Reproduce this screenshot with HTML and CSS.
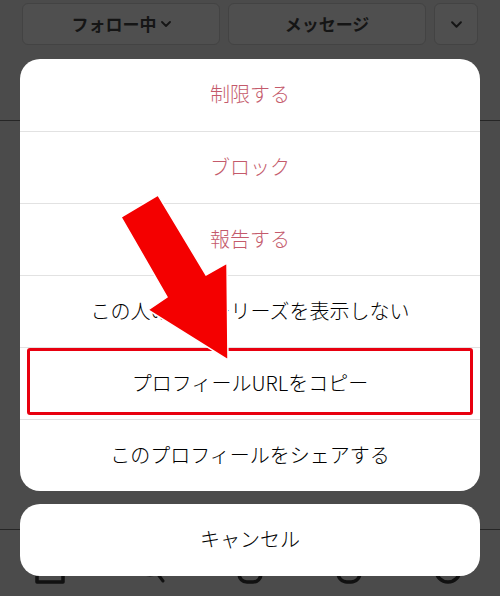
FILE: index.html
```html
<!DOCTYPE html>
<html lang="ja">
<head>
<meta charset="utf-8">
<link rel="stylesheet" href="styles.css">
</head>
<body>
<div class="page">
  <div class="topbar">
    <div class="btn btn-wide">フォロー中<svg class="chev" viewBox="0 0 10 6" width="10" height="6"><path d="M1 1l4 4 4-4" fill="none" stroke="#151515" stroke-width="1.8" stroke-linecap="round" stroke-linejoin="round"/></svg></div>
    <div class="btn btn-wide">メッセージ</div>
    <div class="btn btn-small"><svg class="chev" viewBox="0 0 10 6" width="11" height="7"><path d="M1 1l4 4 4-4" fill="none" stroke="#151515" stroke-width="1.8" stroke-linecap="round" stroke-linejoin="round"/></svg></div>
  </div>
  <div class="rule rule-tabs"></div>
  <div class="spacer"></div>
  <div class="rule rule-nav"></div>
  <div class="nav">
    <svg class="nav-icon" width="32" height="30" viewBox="0 0 32 30"><path d="M3 12L16 2l13 10v16H3z" fill="none" stroke="#111" stroke-width="3.5" stroke-linejoin="round"/></svg>
    <svg class="nav-icon" width="26" height="30" viewBox="0 0 26 30"><circle cx="11" cy="12" r="9" fill="none" stroke="#111" stroke-width="3"/><path d="M18 19l6 8" stroke="#111" stroke-width="3" stroke-linecap="round"/></svg>
    <svg class="nav-icon" width="26" height="30" viewBox="0 0 26 30"><rect x="2" y="4" width="22" height="24" rx="8" fill="none" stroke="#111" stroke-width="3.5"/></svg>
    <svg class="nav-icon" width="26" height="30" viewBox="0 0 26 30"><rect x="2" y="4" width="22" height="24" rx="9" fill="none" stroke="#111" stroke-width="3.5"/></svg>
    <svg class="nav-icon" width="28" height="30" viewBox="0 0 28 30"><circle cx="14" cy="16" r="12" fill="none" stroke="#111" stroke-width="3.5"/></svg>
  </div>

  <div class="overlay">
    <div class="sheet">
      <div class="item danger">制限する</div>
      <div class="item danger">ブロック</div>
      <div class="item danger">報告する</div>
      <div class="item">この人のストーリーズを表示しない</div>
      <div class="item">プロフィールURLをコピー</div>
      <div class="item">このプロフィールをシェアする</div>
    </div>
    <div class="sheet cancel">
      <div class="item">キャンセル</div>
    </div>
  </div>

  <div class="highlight"></div>
  <svg class="arrow" width="500" height="596" viewBox="0 0 500 596">
    <polygon points="158,195 121,217 167,297 148,310 228,360 227,263 206,275" fill="#f40000" stroke="#ffffff" stroke-width="1.5" stroke-linejoin="miter"/>
  </svg>
</div>
</body>
</html>
```

FILE: styles.css
```css
html, body {
  margin: 0;
  padding: 0;
  background: #4b4b4b;
}

.page {
  position: relative;
  width: 500px;
  height: 596px;
  overflow: hidden;
  background: #4b4b4b;
  font-family: "Noto Sans CJK JP", "Noto Sans", sans-serif;
}

.topbar {
  display: flex;
  gap: 8px;
  padding: 3px 22px 0 22px;
  height: 42px;
}

.btn {
  box-sizing: border-box;
  height: 42px;
  border: 1px solid #434343;
  background: #4f4f4f;
  border-radius: 6px;
  display: flex;
  align-items: center;
  justify-content: center;
  gap: 4px;
  font-size: 17px;
  font-weight: 700;
  color: #151515;
  padding-bottom: 2px;
}

.btn-wide { width: 198px; }
.btn-small { width: 44px; }

.chev { display: block; margin-top: 2px; }

.rule {
  height: 1px;
  background: #262626;
}

.rule-tabs { margin-top: 75px; }

.spacer { height: 408px; }

.nav {
  display: flex;
  justify-content: space-between;
  align-items: flex-start;
  padding: 24px 38px 0 34px;
}

.nav-icon { display: block; }

.overlay {
  position: absolute;
  left: 20px;
  top: 59px;
  width: 460px;
  display: flex;
  flex-direction: column;
  gap: 13px;
}

.sheet {
  background: #ffffff;
  border-radius: 20px;
  overflow: hidden;
}

.item {
  height: 72px;
  display: flex;
  align-items: center;
  justify-content: center;
  font-size: 20px;
  font-weight: 300;
  color: #000000;
  border-top: 1px solid #e2e2e2;
  box-sizing: border-box;
  padding-bottom: 3px;
}

.item:first-child { border-top: none; }

.danger { color: #c45a6b; }

.highlight {
  position: absolute;
  left: 27px;
  top: 348px;
  width: 446px;
  height: 67px;
  box-sizing: border-box;
  border: 3px solid #e8000f;
  border-radius: 3px;
}

.arrow {
  position: absolute;
  left: 0;
  top: 0;
}
```
